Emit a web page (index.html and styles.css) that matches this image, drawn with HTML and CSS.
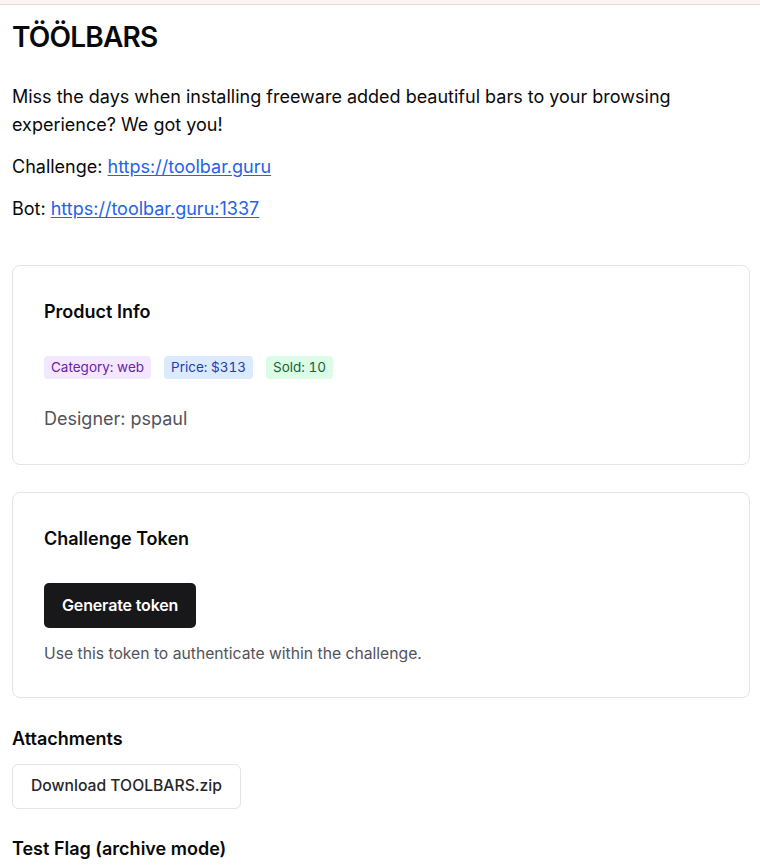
FILE: index.html
```html
<!DOCTYPE html>
<html lang="en">
<head>
<meta charset="utf-8">
<title>TÖÖLBARS</title>
<link rel="stylesheet" href="styles.css">
</head>
<body>
<div class="top-strip"></div>
<main class="page">
  <h1 class="title">TÖÖLBARS</h1>
  <p class="text">Miss the days when installing freeware added beautiful bars to your browsing experience? We got you!</p>
  <p class="text">Challenge: <a href="#" class="link">https://toolbar.guru</a></p>
  <p class="text">Bot: <a href="#" class="link">https://toolbar.guru:1337</a></p>

  <section class="card card-info">
    <h3 class="card-title">Product Info</h3>
    <div class="badges">
      <span class="badge badge-purple">Category: web</span>
      <span class="badge badge-blue">Price: $313</span>
      <span class="badge badge-green">Sold: 10</span>
    </div>
    <p class="designer">Designer: pspaul</p>
  </section>

  <section class="card card-token">
    <h3 class="card-title">Challenge Token</h3>
    <button class="btn-dark" type="button">Generate token</button>
    <p class="hint">Use this token to authenticate within the challenge.</p>
  </section>

  <h3 class="section-title">Attachments</h3>
  <button class="btn-outline" type="button">Download TOOLBARS.zip</button>

  <h3 class="section-title flag-title">Test Flag (archive mode)</h3>
</main>
</body>
</html>
```

FILE: styles.css
```css
* { box-sizing: border-box; }

html, body {
  margin: 0;
  background: #ffffff;
}

body {
  font-family: Inter, "Noto Sans", sans-serif;
  color: #09090b;
  overflow: hidden;
}

.top-strip {
  height: 5px;
  background: #fff4f2;
  border-bottom: 1px solid #f6d6ce;
}

.page {
  padding: 0 10px 0 12px;
}

.title {
  font-size: 28px;
  font-weight: 600;
  line-height: 34px;
  margin: 15px 0 29px;
  letter-spacing: -0.8px;
}

.text {
  font-size: 18px;
  line-height: 28px;
  margin: 0 0 14px;
}

.link {
  color: #2563eb;
  text-decoration: underline;
  text-underline-offset: 2px;
}

.card {
  border: 1px solid #e4e4e7;
  border-radius: 8px;
  padding: 32px 31px 32px;
  background: #fff;
}

.card-info {
  margin-top: 42px;
}

.card-token {
  margin-top: 27px;
}

.card-title {
  font-size: 18px;
  line-height: 28px;
  font-weight: 600;
  margin: 0 0 30px;
}

.badges {
  display: flex;
  gap: 13px;
  margin-bottom: 26px;
}

.badge {
  font-size: 13.5px;
  line-height: 19px;
  padding: 2px 7px;
  border-radius: 4px;
  font-weight: 400;
  font-variant-numeric: tabular-nums;
}

.badge-purple { background: #f3e8ff; color: #6b21a8; }
.badge-blue { background: #dbeafe; color: #1e40af; }
.badge-green { background: #dcfce7; color: #166534; }

.designer {
  margin: 0;
  font-size: 18px;
  line-height: 27px;
  color: #52525b;
}

.btn-dark {
  display: block;
  font-family: inherit;
  font-size: 16px;
  font-weight: 600;
  line-height: 24px;
  letter-spacing: -0.15px;
  color: #fff;
  background: #18181b;
  border: 0;
  border-radius: 5px;
  padding: 10px 18px 11px;
  margin: 0 0 15px;
}

.hint {
  margin: 0;
  font-size: 15.7px;
  line-height: 22px;
  color: #52525b;
}

.section-title {
  font-size: 18px;
  line-height: 28px;
  font-weight: 600;
  margin: 27px 0 11px;
}

.btn-outline {
  display: block;
  font-family: inherit;
  font-size: 15.7px;
  font-weight: 500;
  line-height: 24px;
  color: #27272a;
  background: #fff;
  border: 1px solid #e4e4e7;
  border-radius: 6px;
  padding: 9px 18px 10px;
}

.flag-title {
  margin-top: 26px;
}
```
